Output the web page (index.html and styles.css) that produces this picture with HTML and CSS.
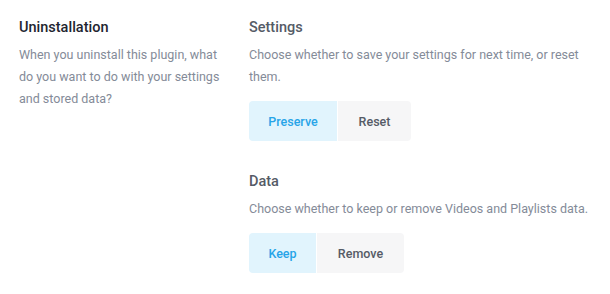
FILE: index.html
```html
<!DOCTYPE html>
<html>
<head>
<meta charset="utf-8">
<link rel="stylesheet" href="styles.css">
</head>
<body>
<div class="page">
  <div class="intro">
    <h2 class="title">Uninstallation</h2>
    <p class="desc">When you uninstall this plugin, what do you want to do with your settings and stored data?</p>
  </div>
  <div class="options">
    <div class="group">
      <h3 class="subtitle">Settings</h3>
      <p class="desc">Choose whether to save your settings for next time, or reset them.</p>
      <div class="toggle">
        <button class="btn active btn-preserve">Preserve</button>
        <button class="btn btn-reset">Reset</button>
      </div>
    </div>
    <div class="group">
      <h3 class="subtitle">Data</h3>
      <p class="desc">Choose whether to keep or remove Videos and Playlists data.</p>
      <div class="toggle">
        <button class="btn active btn-keep">Keep</button>
        <button class="btn btn-remove">Remove</button>
      </div>
    </div>
  </div>
</div>
</body>
</html>
```
FILE: styles.css
```css
* { box-sizing: border-box; }
html, body { margin: 0; padding: 0; background: #fff; }
body { font-family: Roboto, "Liberation Sans", sans-serif; }
.page {
  display: flex;
  padding: 18px 0 0 19px;
}
.intro { width: 230px; padding-right: 18px; }
.title {
  margin: 0;
  font-size: 14.5px;
  font-weight: 500;
  color: #1e2530;
  line-height: 20px;
}
.desc {
  margin: 6px 0 0;
  font-size: 12.5px;
  line-height: 22px;
  color: #848b98;
}
.options { flex: 1; }
.group + .group { margin-top: 31px; }
.subtitle {
  margin: 0;
  font-size: 14.5px;
  font-weight: 500;
  color: #555b66;
  line-height: 20px;
}
.toggle {
  display: flex;
  gap: 1px;
  margin-top: 13px;
}
.btn {
  height: 40px;
  border: 0;
  background: #f6f6f7;
  color: #555b66;
  font-family: inherit;
  font-size: 12.5px;
  font-weight: 500;
  padding: 0;
}
.btn:first-child { border-radius: 4px 0 0 4px; }
.btn:last-child { border-radius: 0 4px 4px 0; }
.btn.active { background: #e1f4fd; color: #27a4e8; }
.btn-preserve { width: 88px; }
.btn-reset { width: 73px; }
.btn-keep { width: 67px; }
.btn-remove { width: 87px; }
```
